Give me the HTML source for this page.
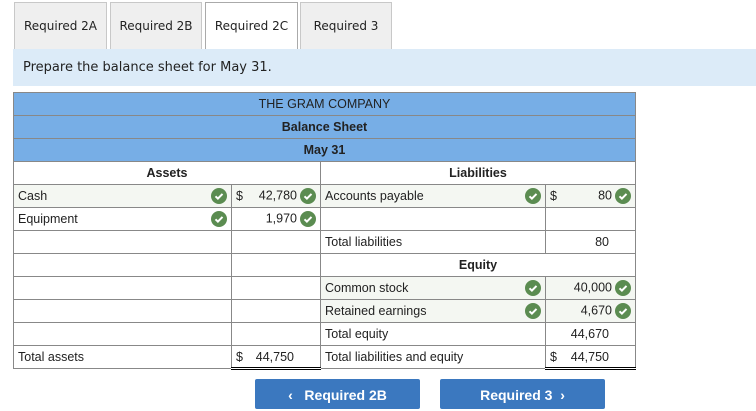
<!DOCTYPE html>
<html><head><style>
body{margin:0;width:756px;height:402px;overflow:hidden;background:#fff;font-family:"Liberation Sans",Arial,sans-serif;position:relative}
.tab{position:absolute;top:2px;height:47px;box-sizing:border-box;border:1px solid #c8c8c8;border-bottom:none;background:#efefef;font-family:"DejaVu Sans",sans-serif;font-size:12px;color:#222;text-align:center;line-height:46px}
.tab.act{background:#fff;border-color:#aaa}
.band{position:absolute;left:13px;top:49px;width:743px;height:37px;background:#dcebf8;font-family:"DejaVu Sans",sans-serif;font-size:13px;color:#222;line-height:38px;padding-left:10px;box-sizing:border-box}
table{position:absolute;left:13px;top:92px;border-collapse:collapse;table-layout:fixed;font-size:12.5px;color:#222}
tr{height:23px}
td{border:1px solid #888;height:23px;padding:0 4px;white-space:nowrap;box-sizing:border-box}
.h td{background:#77aee6;text-align:center;font-weight:bold;color:#222}
.g{background:#f4f7f2}
.c{text-align:center;font-weight:bold}
.r{text-align:right}
.ck{display:inline-block;width:16px;height:16px;vertical-align:middle;margin-left:3px}
.fl{display:flex;justify-content:space-between;align-items:center}
.btn{position:absolute;top:379px;height:30px;background:#3b78bf;color:#fff;font-weight:bold;font-size:14px;text-align:center;line-height:32px;border-radius:2px}
.tb{border-top:1px solid #000}
.db{border-bottom:3px double #000}
</style></head><body>
<div class="tab" style="left:14px;width:93px">Required 2A</div>
<div class="tab" style="left:110px;width:92px">Required 2B</div>
<div class="tab act" style="left:205px;width:93px;height:48px">Required 2C</div>
<div class="tab" style="left:300px;width:92px">Required 3</div>
<div class="band">Prepare the balance sheet for May 31.</div>
<svg width="0" height="0" style="position:absolute"><defs><symbol id="k" viewBox="0 0 16 16"><circle cx="8" cy="8" r="8" fill="#5b8c51"/><path d="M4.5 8.3l2.4 2.3 4.6-4.7" stroke="#fff" stroke-width="2" fill="none"/></symbol></defs></svg>
<table>
<colgroup><col style="width:218px"><col style="width:89px"><col style="width:225px"><col style="width:90px"></colgroup>
<tr class="h"><td colspan="4" style="font-weight:normal">THE GRAM COMPANY</td></tr>
<tr class="h"><td colspan="4">Balance Sheet</td></tr>
<tr class="h"><td colspan="4">May 31</td></tr>
<tr><td colspan="2" class="c">Assets</td><td colspan="2" class="c">Liabilities</td></tr>
<tr><td class="g"><div class="fl">Cash<svg class="ck"><use href="#k"/></svg></div></td><td class="g"><div class="fl"><span>$</span><span>42,780<svg class="ck"><use href="#k"/></svg></span></div></td><td class="g"><div class="fl">Accounts payable<svg class="ck"><use href="#k"/></svg></div></td><td class="g"><div class="fl"><span>$</span><span>80<svg class="ck"><use href="#k"/></svg></span></div></td></tr>
<tr><td><div class="fl">Equipment<svg class="ck"><use href="#k"/></svg></div></td><td class="r">1,970<svg class="ck"><use href="#k"/></svg></td><td></td><td></td></tr>
<tr><td></td><td></td><td>Total liabilities</td><td class="r tb" style="padding-right:26px">80</td></tr>
<tr><td></td><td></td><td colspan="2" class="c">Equity</td></tr>
<tr><td></td><td></td><td class="g"><div class="fl">Common stock<svg class="ck"><use href="#k"/></svg></div></td><td class="g r">40,000<svg class="ck"><use href="#k"/></svg></td></tr>
<tr><td></td><td></td><td class="g"><div class="fl">Retained earnings<svg class="ck"><use href="#k"/></svg></div></td><td class="g r">4,670<svg class="ck"><use href="#k"/></svg></td></tr>
<tr><td></td><td></td><td>Total equity</td><td class="r tb" style="padding-right:26px">44,670</td></tr>
<tr><td>Total assets</td><td class="tb db"><div class="fl" style="padding-right:22px"><span>$</span><span>44,750</span></div></td><td>Total liabilities and equity</td><td class="tb db"><div class="fl" style="padding-right:22px"><span>$</span><span>44,750</span></div></td></tr>
</table>
<div class="btn" style="left:255px;width:165px">&#8249;&nbsp;&nbsp; Required 2B</div>
<div class="btn" style="left:440px;width:165px">Required 3 &nbsp;&#8250;</div>
</body></html>
